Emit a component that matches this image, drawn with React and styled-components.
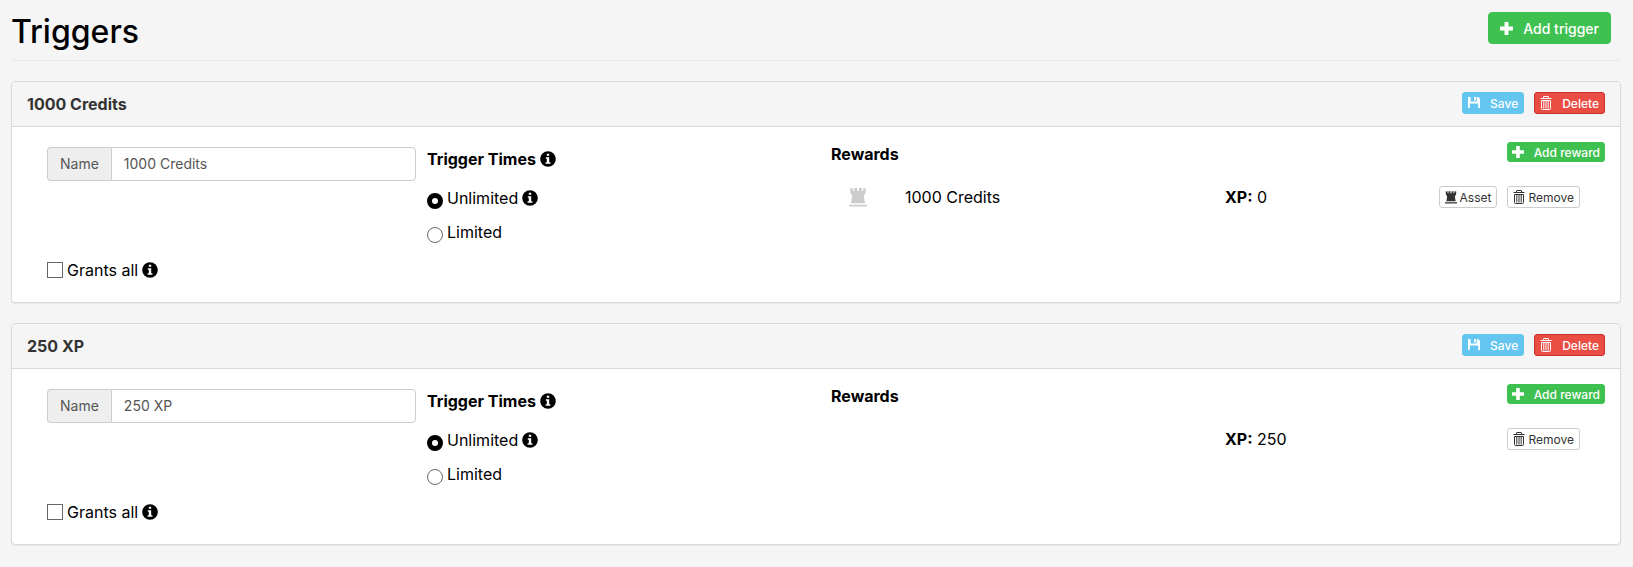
import React from "react";
import styled, { createGlobalStyle, css } from "styled-components";

const GlobalStyle = createGlobalStyle`
  * {
    box-sizing: border-box;
  }
  body {
    margin: 0;
    background-color: #f5f5f5;
    color: #000;
    font-family: Inter, "Liberation Sans", sans-serif;
    font-size: 16px;
    line-height: 20px;
  }
`;

const Page = styled.main`
  padding: 12px 12px 20px 11px;
`;

const PageHeader = styled.header`
  display: flex;
  justify-content: space-between;
  align-items: flex-start;
  margin-bottom: 20px;
  padding-right: 10px;
  border-bottom: 1px solid #eaeaea;

  h1 {
    margin: 0;
    padding-bottom: 8px;
    font-size: 32px;
    line-height: 40px;
    font-weight: 500;
  }
`;

const Panel = styled.section`
  margin-bottom: 20px;
  background-color: #fff;
  border: 1px solid #d9d9d9;
  border-radius: 4px;
  box-shadow: 0 1px 1px rgba(0, 0, 0, 0.05);
`;

const PanelHeading = styled.div`
  display: flex;
  justify-content: space-between;
  align-items: flex-start;
  padding: 10px 15px;
  background-color: #f5f5f5;
  border-bottom: 1px solid #d9d9d9;
  border-radius: 3px 3px 0 0;

  h2 {
    margin: 0;
    font-size: 16px;
    line-height: 24px;
    font-weight: 700;
    color: #333;
  }
`;

const ButtonGroup = styled.div`
  display: flex;
  justify-content: flex-end;
  gap: 10px;
`;

const variants = {
  success: css`
    padding: 0 4px;
    color: #fff;
    background-color: #3fc151;
    border-color: #3fc151;
  `,
  info: css`
    color: #fff;
    background-color: #63c5f0;
    border-color: #63c5f0;
  `,
  danger: css`
    color: #fff;
    background-color: #ea4d43;
    border-color: #c9302c;
  `,
  default: css`
    gap: 3px;
    color: #333;
    background-color: #fff;
    border-color: #ccc;
    font-weight: 400;
  `,
};

const Button = styled.button`
  display: inline-flex;
  align-items: center;
  gap: 10px;
  height: ${(props) => props.$height || 22}px;
  padding: 0 5px;
  border: 1px solid;
  border-radius: 3px;
  font-family: inherit;
  font-size: 12px;
  font-weight: 500;
  white-space: nowrap;
  cursor: pointer;
  ${(props) => variants[props.$variant]}
  ${(props) =>
    props.$large &&
    css`
      height: 32px;
      padding: 0 11px;
      border-radius: 4px;
      font-size: 14px;
    `}
`;

const PanelBody = styled.div`
  display: grid;
  grid-template-columns: 380fr 404fr 774fr;
  padding: 15px 15px 22px 35px;
`;

const NameColumn = styled.div`
  display: flex;
  flex-direction: column;
  justify-content: space-between;
  padding: 5px 11px 0 0;
`;

const InputGroup = styled.div`
  display: flex;
  height: 34px;
  font-size: 14px;
  color: #555;

  label {
    display: flex;
    align-items: center;
    padding: 0 12px;
    background-color: #eee;
    border: 1px solid #ccc;
    border-right: 0;
    border-radius: 4px 0 0 4px;
  }

  input {
    flex: 1;
    min-width: 0;
    padding: 0 12px;
    border: 1px solid #ccc;
    border-radius: 0 4px 4px 0;
    background-color: #fff;
    color: #555;
    font: inherit;
  }
`;

const Choice = styled.label`
  display: flex;
  align-items: center;
  gap: 4px;
`;

const Tick = styled.input`
  appearance: none;
  flex: none;
  width: 16px;
  height: 16px;
  margin: 0;
  border: 1px solid #666;
  background-color: #fff;
`;

const Dot = styled(Tick)`
  margin-top: 7px;
  border-radius: 50%;

  &:checked {
    border: 5px solid #000;
  }
`;

const TimesColumn = styled.fieldset`
  display: flex;
  flex-direction: column;
  gap: 11px;
  min-width: 0;
  margin: 0;
  padding: 0 0 37px;
  border: 0;

  legend {
    display: flex;
    align-items: center;
    gap: 4px;
    padding: 7px 0 17px;
    font-weight: 700;
  }
`;

const RewardsHeading = styled.div`
  display: flex;
  justify-content: space-between;
  align-items: flex-start;
  margin-bottom: 22px;

  h3 {
    margin: 0;
    padding-top: 2px;
    font-size: 16px;
    line-height: 20px;
    font-weight: 700;
  }
`;

const RewardRow = styled.div`
  display: grid;
  grid-template-columns: 56fr 320fr 204fr 151fr;
  align-items: center;
  padding: 0 25px 0 18px;
`;

const AssetIcon = styled.span`
  display: flex;
  color: #ccc;
`;

const PlusIcon = ({ size = 12 }) => (
  <svg width={size} height={size} viewBox="0 0 12 12" fill="currentColor">
    <path d="M4.2.5Q4.2 0 4.7 0h2.6q.5 0 .5.5v3.7h3.7q.5 0 .5.5v2.6q0 .5-.5.5H7.8v3.7q0 .5-.5.5H4.7q-.5 0-.5-.5V7.8H.5Q0 7.8 0 7.3V4.7q0-.5.5-.5h3.7z" />
  </svg>
);

const SaveIcon = () => (
  <svg width="12" height="14" viewBox="0 0 12 14" fill="currentColor">
    <path d="M0 1h2.6v4.4h6.2V1H10l2 1.8V12h-1.8V7.6H1.8V12H0zM6 1h2v3.4H6z" />
  </svg>
);

const TrashIcon = () => (
  <svg
    width="12"
    height="14"
    viewBox="0 0 12 14"
    fill="none"
    stroke="currentColor">
    <path d="M.5 2.5h11M3.5 2.5V1q0-.5.5-.5h4q.5 0 .5.5v1.5M1.5 4.5v8q0 1 1 1h7q1 0 1-1v-8z" />
    <path d="M3.8 5v7.5M6 5v7.5M8.2 5v7.5" />
  </svg>
);

const TowerIcon = ({ width = 12, height = 13 }) => (
  <svg width={width} height={height} viewBox="0 0 18 19" fill="currentColor">
    <path d="M1 .6 3.9.2V3h1.3V0h2.9v3h1.8V0h2.9v3h1.3V.2L17 .6l-.5 5-1.7 1.6.9 6.8q.2 1.2 1 1.2H1.3q.8 0 1-1.2l.9-6.8-1.7-1.6zM0 16.8h18v1.8H0z" />
  </svg>
);

const InfoIcon = () => (
  <svg width="16" height="16" viewBox="0 0 16 16" role="img" aria-label="Info">
    <circle cx="8" cy="8" r="7.8" />
    <path
      fill="#fff"
      d="M6.8 2.8h2.4v2H6.8zM5.8 6.3h3.4v5h1.2v1.5H5.6v-1.5h1.2V7.8h-1z"
    />
  </svg>
);

const triggers = [
  { id: 1, name: "1000 Credits", reward: { asset: "1000 Credits", xp: 0 } },
  { id: 2, name: "250 XP", reward: { xp: 250 } },
];

const Trigger = ({ id, name, reward }) => (
  <Panel>
    <PanelHeading>
      <h2>{name}</h2>
      <ButtonGroup>
        <Button $variant="info">
          <SaveIcon /> Save
        </Button>
        <Button $variant="danger">
          <TrashIcon /> Delete
        </Button>
      </ButtonGroup>
    </PanelHeading>
    <PanelBody>
      <NameColumn>
        <InputGroup>
          <label htmlFor={`name-${id}`}>Name</label>
          <input id={`name-${id}`} type="text" defaultValue={name} />
        </InputGroup>
        <Choice>
          <Tick type="checkbox" />
          Grants all <InfoIcon />
        </Choice>
      </NameColumn>
      <TimesColumn>
        <legend>
          Trigger Times <InfoIcon />
        </legend>
        <Choice>
          <Dot type="radio" name={`times-${id}`} defaultChecked />
          Unlimited <InfoIcon />
        </Choice>
        <Choice>
          <Dot type="radio" name={`times-${id}`} />
          Limited
        </Choice>
      </TimesColumn>
      <div>
        <RewardsHeading>
          <h3>Rewards</h3>
          <Button $variant="success" $height={20}>
            <PlusIcon /> Add reward
          </Button>
        </RewardsHeading>
        <RewardRow>
          <AssetIcon>
            {reward.asset && <TowerIcon width={18} height={19} />}
          </AssetIcon>
          <span>{reward.asset}</span>
          <span>
            <b>XP:</b> {reward.xp}
          </span>
          <ButtonGroup>
            {reward.asset && (
              <Button $variant="default">
                <TowerIcon /> Asset
              </Button>
            )}
            <Button $variant="default">
              <TrashIcon /> Remove
            </Button>
          </ButtonGroup>
        </RewardRow>
      </div>
    </PanelBody>
  </Panel>
);

const App = () => {
  return (
    <>
      <GlobalStyle />
      <Page>
        <PageHeader>
          <h1>Triggers</h1>
          <Button $variant="success" $large>
            <PlusIcon size={13} /> Add trigger
          </Button>
        </PageHeader>
        {triggers.map((trigger) => (
          <Trigger key={trigger.id} {...trigger} />
        ))}
      </Page>
    </>
  );
};

export default App;
